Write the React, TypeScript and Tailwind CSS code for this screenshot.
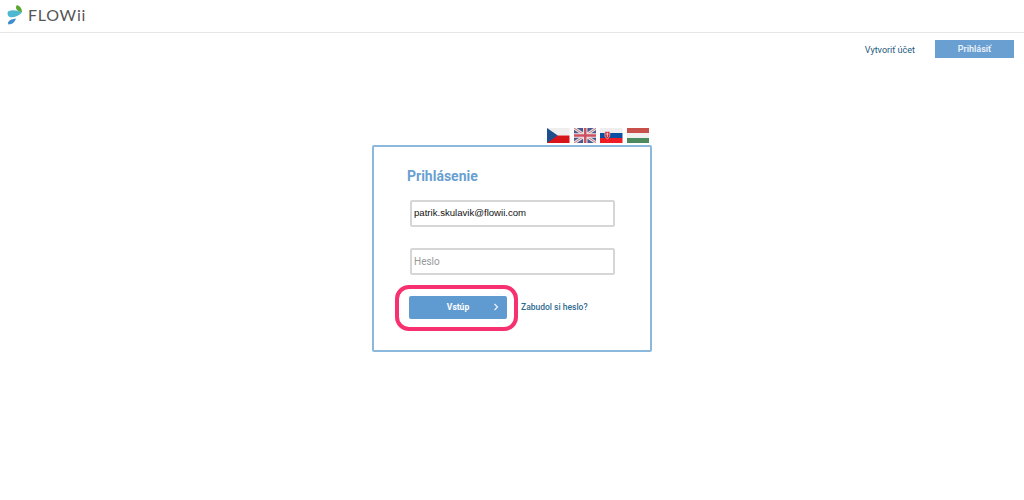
function Logo() {
  return (
    <svg width="24" height="26" viewBox="0 0 24 26" className="shrink-0">
      <path d="M17 5 C20 6 22 8.5 22 12 C19 12 16 10 16 7.5 C16 6.5 16.5 5.5 17 5Z" fill="#5aa832" />
      <path d="M8 11.5 C12 9.5 17 10 22 12.5 C19 16 13 18 9.5 17 C7.5 16 7 13 8 11.5Z" fill="#4fb8d0" />
      <path d="M8.5 24.5 C7 22.5 8.5 19.5 16 18.5 C15 21.5 12.5 24.5 8.5 24.5Z" fill="#3f8fd0" />
    </svg>
  );
}

function FlagCz() {
  return (
    <svg width="22.5" height="15" viewBox="0 0 23 15" preserveAspectRatio="none">
      <rect width="23" height="7.5" fill="#eeeeee" />
      <rect y="7.5" width="23" height="7.5" fill="#d7141a" />
      <path d="M0 0 L11 7.5 L0 15Z" fill="#1f4e8c" />
    </svg>
  );
}

function FlagGb() {
  return (
    <svg width="22.5" height="15" viewBox="0 0 23 15" preserveAspectRatio="none">
      <rect width="23" height="15" fill="#4a5a8c" />
      <path d="M0 0 L23 15 M23 0 L0 15" stroke="#e8e8e8" strokeWidth="3" />
      <path d="M0 0 L23 15 M23 0 L0 15" stroke="#d0707c" strokeWidth="1" />
      <path d="M11.5 0 V15 M0 7.5 H23" stroke="#e8e8e8" strokeWidth="4.5" />
      <path d="M11.5 0 V15 M0 7.5 H23" stroke="#cf5060" strokeWidth="2.5" />
    </svg>
  );
}

function FlagSk() {
  return (
    <svg width="22.5" height="15" viewBox="0 0 23 15" preserveAspectRatio="none">
      <rect width="23" height="5" fill="#eeeeee" />
      <rect y="5" width="23" height="5" fill="#0b4ea2" />
      <rect y="10" width="23" height="5" fill="#ee1c25" />
      <path d="M5 3.5 H10 V7.5 C10 9 8.8 10 7.5 10.8 C6.2 10 5 9 5 7.5Z" fill="#d9252c" stroke="#eeeeee" strokeWidth="0.6" />
      <path d="M7.5 4.5 V9 M6.2 6 H8.8" stroke="#ffffff" strokeWidth="0.7" />
    </svg>
  );
}

function FlagHu() {
  return (
    <svg width="22.5" height="15" viewBox="0 0 23 15" preserveAspectRatio="none">
      <rect width="23" height="5" fill="#c8504a" />
      <rect y="5" width="23" height="5" fill="#f0f0f0" />
      <rect y="10" width="23" height="5" fill="#4a8a5c" />
    </svg>
  );
}

export default function App() {
  return (
    <div
      className="w-[1024px] h-[500px] overflow-hidden bg-white"
      style={{ fontFamily: "Roboto, sans-serif" }}
    >
      <header className="h-[33px] border-b border-[#e6e6e6] flex items-start gap-[4px]">
        <Logo />
        <span className="mt-[6px] text-[16px] leading-[18px] tracking-[0.75px] text-[#555555] font-['Lato',sans-serif]">
          FLOWii
        </span>
      </header>

      <nav className="h-[25px] mt-[7px] flex items-stretch justify-end pr-[10px]">
        <a className="text-[9px] text-[#1c5a80] self-start mt-[4px] mr-[20px]">Vytvoriť účet</a>
        <button className="w-[79px] h-[18px] bg-[#6a9fd2] text-[#f0f5fb] text-[9px] font-medium leading-none">
          Prihlásiť
        </button>
      </nav>

      <main className="relative w-[280px] ml-[372px] mt-[63px]">
        <div className="flex justify-end gap-[4px] pr-[3px] h-[17px]">
          <FlagCz />
          <FlagGb />
          <FlagSk />
          <FlagHu />
        </div>

        <section className="h-[207px] border-2 border-[#8db8de] rounded-[2px] pl-[33px] pt-[19px]">
          <h1 className="text-[14px] leading-[20px] font-bold text-[#6a9fd2]">Prihlásenie</h1>

          <div className="mt-[14px] ml-[3px] w-[205px] h-[27px] border-2 border-[#d6d6d6] rounded-[2px] flex items-center pl-[2px] text-[9.6px] text-[#111111] font-['Liberation_Sans',sans-serif]">
            patrik.skulavik@flowii.com
          </div>
          <div className="mt-[21px] ml-[3px] w-[205px] h-[27px] border-2 border-[#d6d6d6] rounded-[2px] flex items-center pl-[2px] text-[10px] text-[#999999]">
            Heslo
          </div>

          <div className="mt-[21px] ml-[2px] flex items-center gap-[14px]">
            <button className="relative w-[98px] h-[23px] bg-[#5f9bd0] rounded-[2px] text-white text-[8.5px] font-bold flex items-center justify-center">
              Vstúp
              <svg width="6" height="8" viewBox="0 0 6 8" className="absolute right-[8px] top-[7px]">
                <path d="M1.5 1 L4.5 4 L1.5 7" fill="none" stroke="#eef4fa" strokeWidth="1.2" />
              </svg>
            </button>
            <a className="text-[8.5px] font-medium text-[#2f6a8f]">Zabudol si heslo?</a>
          </div>
        </section>

        {/* pink annotation ring around the button */}
        <div className="absolute left-[23px] top-[157px] w-[123px] h-[46px] border-[4px] border-[#f7316f] rounded-[14px]" />
      </main>
    </div>
  );
}
